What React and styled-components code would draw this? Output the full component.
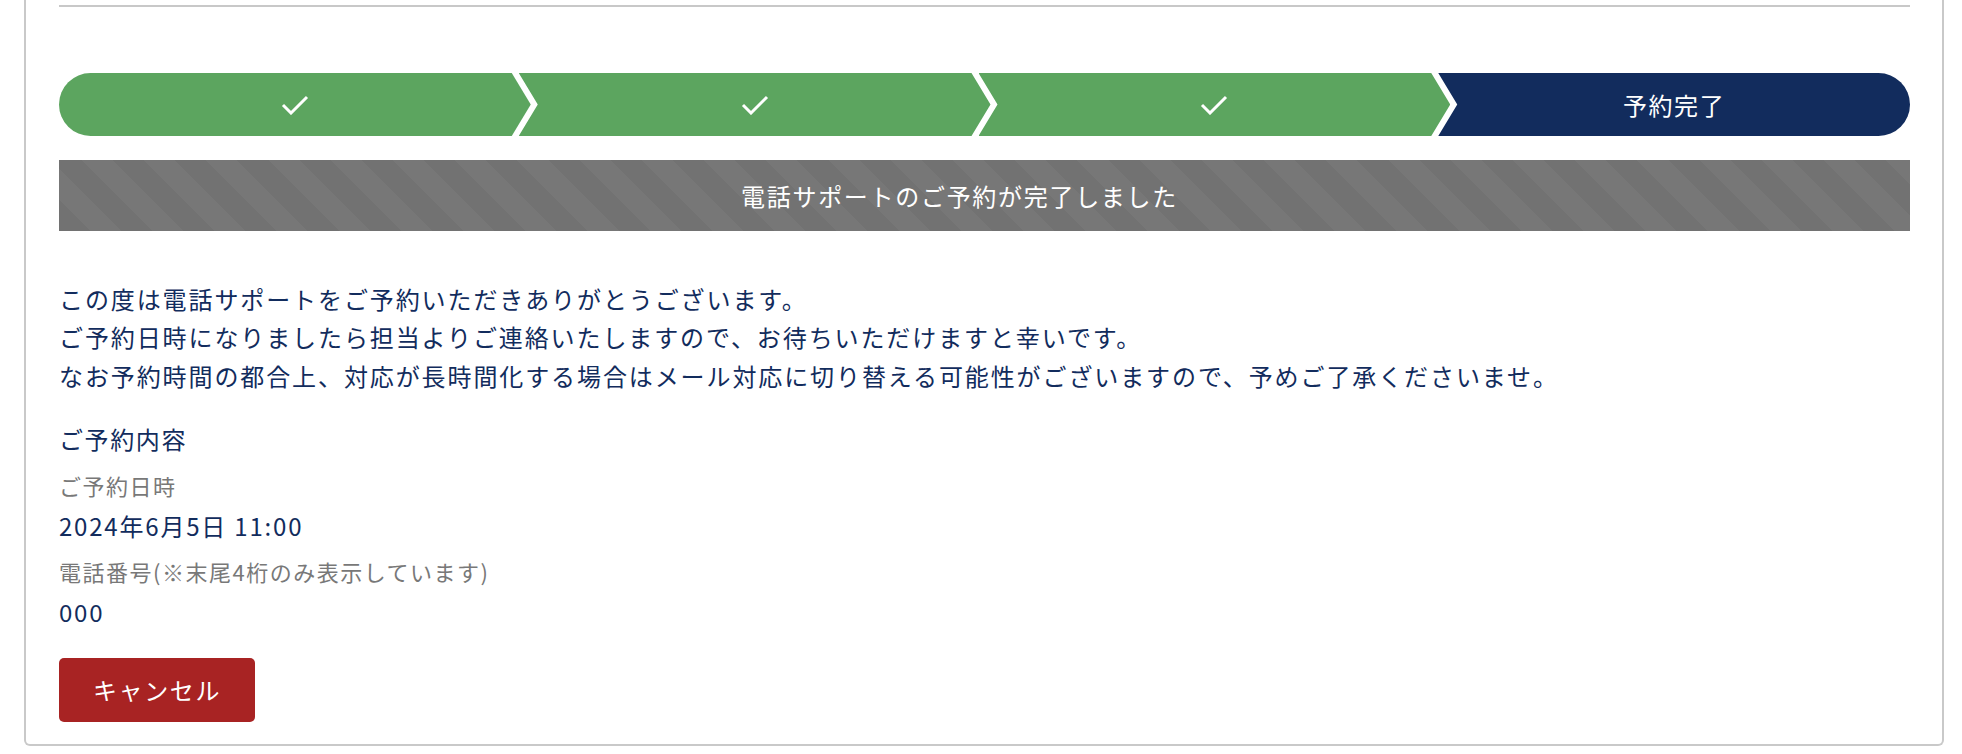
import React from "react";
import styled, { createGlobalStyle } from "styled-components";

const GlobalStyle = createGlobalStyle`
  body {
    margin: 0;
    background: #fff;
    font-family: "Noto Sans CJK JP", "Noto Sans", sans-serif;
  }
  * { box-sizing: border-box; }
`;

const NAVY = "#122c5d";
const GREEN = "#5ca55f";

let Page = styled.div`
  padding: 0 18px 0 24px;
`;

let Card = styled.div`
  width: 1920px;
  border: 2px solid #c9c9c9;
  border-top: none;
  border-radius: 0 0 6px 6px;
  padding: 5px 32px 22px 33px;
  background: #fff;
`;

let Rule = styled.div`
  height: 2px;
  background: #c8c8c8;
`;

let Steps = styled.div`
  display: flex;
  height: 63px;
  margin-top: 66px;
`;

const clips = {
  first: "polygon(0 0, calc(100% - 19px) 0, 100% 50%, calc(100% - 19px) 100%, 0 100%)",
  middle:
    "polygon(0 0, calc(100% - 19px) 0, 100% 50%, calc(100% - 19px) 100%, 0 100%, 19px 50%)",
  last: "polygon(0 0, 100% 0, 100% 100%, 0 100%, 19px 50%)",
};

let Step = styled.div`
  flex: 1;
  display: flex;
  align-items: center;
  justify-content: center;
  margin-left: ${(p) => (p.$pos === "first" ? "0" : "-12px")};
  background: ${(p) => (p.$done ? GREEN : NAVY)};
  clip-path: ${(p) => clips[p.$pos]};
  border-radius: ${(p) =>
    p.$pos === "first" ? "32px 0 0 32px" : p.$pos === "last" ? "0 32px 32px 0" : "0"};
  color: #fff;
  font-size: 24px;
  letter-spacing: 1.6px;
`;

let Band = styled.div`
  margin-top: 24px;
  height: 71px;
  display: flex;
  align-items: center;
  justify-content: center;
  padding-right: 50px;
  background: repeating-linear-gradient(45deg, #727272 0 22px, #777777 22px 44px);
  color: #fff;
  font-size: 24px;
  letter-spacing: 1.7px;
`;

let Message = styled.p`
  margin: 49px 0 0;
  color: ${NAVY};
  font-size: 24px;
  line-height: 1.6;
  letter-spacing: 1.9px;
`;

let Details = styled.div`
  margin-top: 25px;
  display: flex;
  flex-direction: column;
  align-items: flex-start;
`;

let Heading = styled.div`
  color: ${NAVY};
  font-size: 24px;
  line-height: 38.4px;
  letter-spacing: 1.6px;
  margin-bottom: 9px;
`;

let Label = styled.div`
  color: #787878;
  font-size: 22px;
  line-height: 35.2px;
  letter-spacing: 1.5px;
  margin-bottom: 4px;
`;

let Value = styled.div`
  color: ${NAVY};
  font-size: 24px;
  line-height: 38.4px;
  letter-spacing: 1.8px;
  margin-bottom: 9px;
`;

let CancelButton = styled.button`
  margin-top: 17px;
  width: 196px;
  height: 64px;
  border: 0;
  border-radius: 5px;
  background: #a82323;
  color: #fff;
  font-family: inherit;
  font-size: 24px;
  letter-spacing: 1.6px;
  cursor: pointer;
`;

const Check = () => (
  <svg width="28" height="20" viewBox="0 0 28 20">
    <polyline points="2,10 10,18 26,2" fill="none" stroke="#fff" strokeWidth="3" />
  </svg>
);

const App = () => {
  let steps = [
    { pos: "first", done: true },
    { pos: "middle", done: true },
    { pos: "middle", done: true },
    { pos: "last", done: false, label: "予約完了" },
  ];

  return (
    <Page>
      <GlobalStyle />
      <Card>
        <Rule />
        <Steps>
          {steps.map((s, i) => (
            <Step key={i} $pos={s.pos} $done={s.done}>
              {s.done ? <Check /> : s.label}
            </Step>
          ))}
        </Steps>
        <Band>電話サポートのご予約が完了しました</Band>
        <Message>
          この度は電話サポートをご予約いただきありがとうございます。
          <br />
          ご予約日時になりましたら担当よりご連絡いたしますので、お待ちいただけますと幸いです。
          <br />
          なお予約時間の都合上、対応が長時間化する場合はメール対応に切り替える可能性がございますので、予めご了承くださいませ。
        </Message>
        <Details>
          <Heading>ご予約内容</Heading>
          <Label>ご予約日時</Label>
          <Value>2024年6月5日 11:00</Value>
          <Label>電話番号(※末尾4桁のみ表示しています)</Label>
          <Value>000</Value>
          <CancelButton>キャンセル</CancelButton>
        </Details>
      </Card>
    </Page>
  );
};

export default App;
